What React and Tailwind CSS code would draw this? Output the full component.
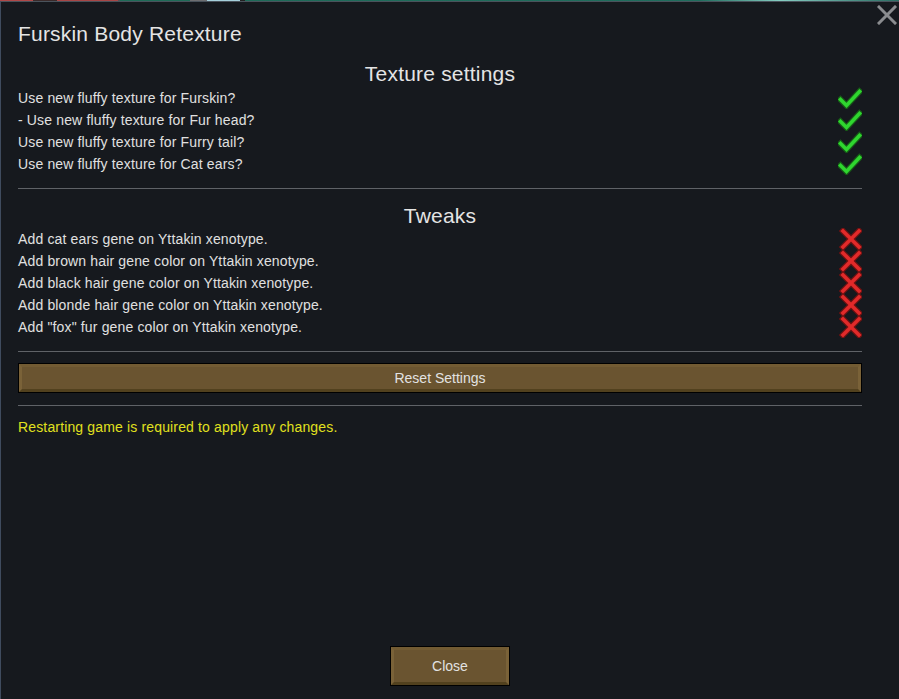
import React from "react";

const FONT = { fontFamily: '"Liberation Sans", Arial, sans-serif' };

const texturas = [
  "Use new fluffy texture for Furskin?",
  "- Use new fluffy texture for Fur head?",
  "Use new fluffy texture for Furry tail?",
  "Use new fluffy texture for Cat ears?",
];

const ajustes = [
  "Add cat ears gene on Yttakin xenotype.",
  "Add brown hair gene color on Yttakin xenotype.",
  "Add black hair gene color on Yttakin xenotype.",
  "Add blonde hair gene color on Yttakin xenotype.",
  'Add "fox" fur gene color on Yttakin xenotype.',
];

function Check() {
  return (
    <svg width="24" height="22" viewBox="0 0 24 22" className="shrink-0">
      <polyline points="2.5,12.5 8.5,18.5 21.5,4.5" fill="none" stroke="#175c17" strokeWidth="6" strokeLinejoin="miter" strokeLinecap="square" />
      <polyline points="2.5,12.5 8.5,18.5 21.5,4.5" fill="none" stroke="#2fd62f" strokeWidth="3.6" strokeLinejoin="miter" strokeLinecap="square" />
    </svg>
  );
}

function Cross() {
  return (
    <svg width="24" height="22" viewBox="0 0 24 22" className="shrink-0">
      <g stroke="#6b1212" strokeWidth="6" strokeLinecap="square">
        <line x1="5" y1="3" x2="21" y2="19" />
        <line x1="21" y1="3" x2="5" y2="19" />
      </g>
      <g stroke="#e12a2a" strokeWidth="3.6" strokeLinecap="square">
        <line x1="5" y1="3" x2="21" y2="19" />
        <line x1="21" y1="3" x2="5" y2="19" />
      </g>
    </svg>
  );
}

function Linha({ texto, ativo }) {
  return (
    <div className="flex h-[22px] items-center justify-between">
      <span className="text-[14px] leading-[22px] tracking-[0.15px] text-[#e0e0e0]">{texto}</span>
      {ativo ? <Check /> : <Cross />}
    </div>
  );
}

function Separador({ className }) {
  return <div className={`h-px bg-[#5f6267] ${className}`} />;
}

function BotaoMadeira({ children, className }) {
  return (
    <button type="button" className={`border border-black ${className}`}>
      <div className="flex h-full w-full items-center justify-center border-[3px] border-t-[#725b33] border-l-[#7a6238] border-r-[#7a6238] border-b-[#52411e] bg-[#6a5430] text-[14px] text-[#e2e2e2]">
        {children}
      </div>
    </button>
  );
}

export default function App() {
  return (
    <div className="flex h-[699px] w-[899px] flex-col overflow-hidden bg-[#16191e]" style={FONT}>
      {/* faixa do fundo do jogo */}
      <div className="h-px w-full shrink-0 bg-[linear-gradient(to_right,#b04848_0px,#b04848_33px,#3a2a2a_33px,#3a2a2a_57px,#a84646_57px,#a84646_118px,#555_118px,#555_120px,#1e6b57_120px,#1e6b57_190px,#6d6d70_190px,#6d6d70_207px,#a6d0dc_207px,#a6d0dc_240px,#222_240px,#222_245px,#1d6a58_245px,#1f6d5d_700px,#86cdc2_780px,#2a6d62_899px)]" />

      {/* janela */}
      <div className="relative flex flex-1 flex-col border-t border-l border-t-[#4a535c] border-l-[#3f4b5e]">
        <svg width="20" height="20" viewBox="0 0 20 20" className="absolute right-[2px] top-[3px]">
          <g stroke="#8a8c8f" strokeWidth="3" strokeLinecap="square">
            <line x1="2" y1="2" x2="18" y2="18" />
            <line x1="18" y1="2" x2="2" y2="18" />
          </g>
        </svg>

        <div className="flex flex-col pl-[17px] pr-[37px] pt-[20px]">
          <h1 className="text-[21px] leading-[24px] tracking-[0.2px] text-[#e4e4e4]">Furskin Body Retexture</h1>

          <h2 className="mt-[16px] text-center text-[21px] leading-[24px] tracking-[0.2px] text-[#e4e4e4]">Texture settings</h2>
          <div className="mt-px flex flex-col">
            {texturas.map((t) => (
              <Linha key={t} texto={t} ativo />
            ))}
          </div>

          <Separador className="mt-[13px]" />

          <h2 className="mt-[15px] text-center text-[21px] leading-[24px] tracking-[0.2px] text-[#e4e4e4]">Tweaks</h2>
          <div className="flex flex-col">
            {ajustes.map((t) => (
              <Linha key={t} texto={t} ativo={false} />
            ))}
          </div>

          <Separador className="mt-[13px]" />

          <BotaoMadeira className="mt-[11px] h-[30px] w-full">Reset Settings</BotaoMadeira>

          <Separador className="mt-[12px]" />

          <p className="mt-[10px] text-[14px] leading-[22px] tracking-[0.15px] text-[#e0e01e]">
            Restarting game is required to apply any changes.
          </p>
        </div>

        <div className="mt-auto flex justify-center pb-[13px]">
          <BotaoMadeira className="h-[40px] w-[120px]">Close</BotaoMadeira>
        </div>
      </div>
    </div>
  );
}
